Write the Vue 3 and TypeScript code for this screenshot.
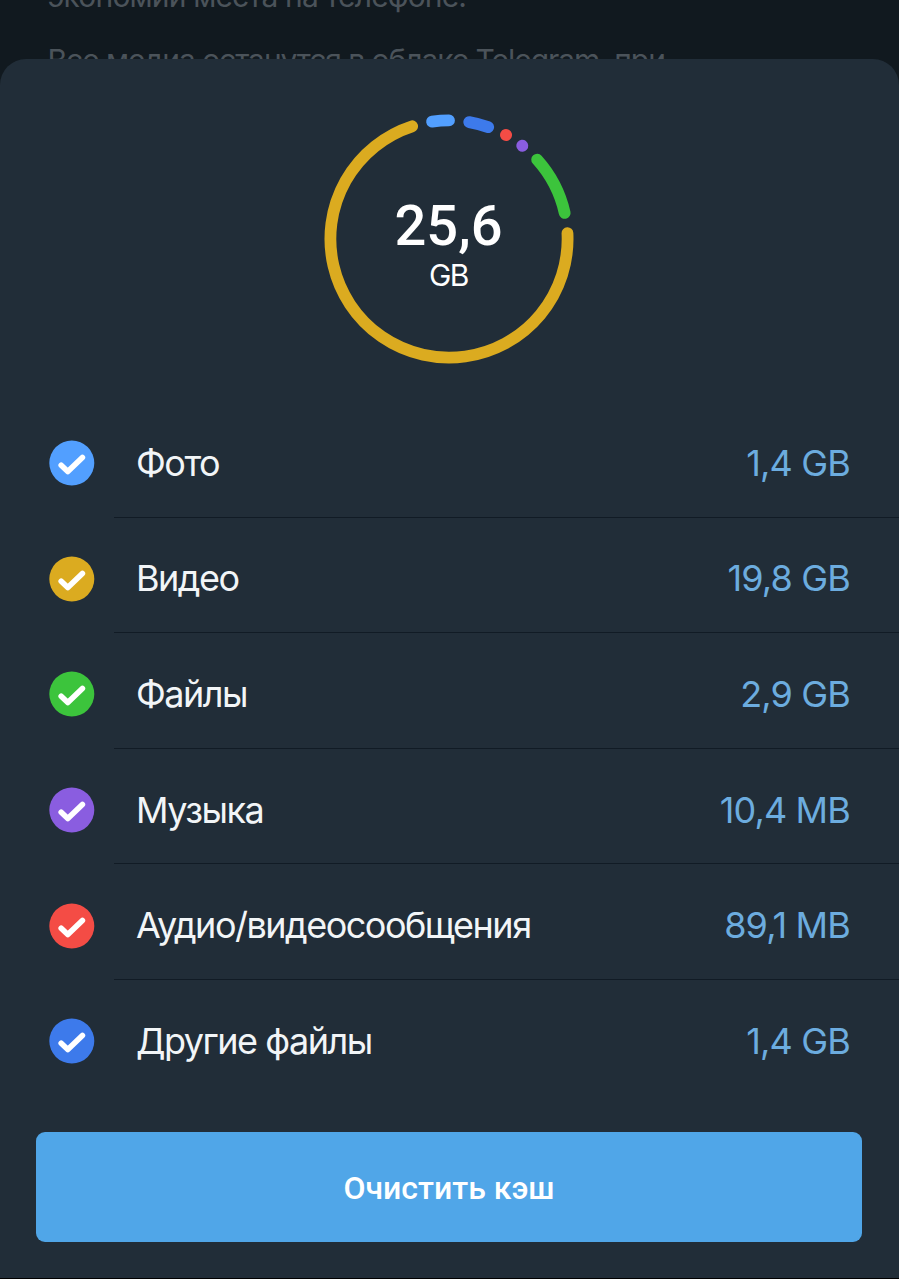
<template>
  <div class="screen">
    <div class="backdrop">
      <p class="hint">экономии места на телефоне.</p>
      <p class="hint hint-second">Все медиа останутся в облаке Telegram, при</p>
    </div>

    <div class="sheet">
      <div class="chart">
        <svg class="ring" viewBox="0 0 250 250">
          <path
            v-for="arc in arcs"
            :key="arc.color"
            :d="arcPath(arc.from, arc.to)"
            :stroke="arc.color"
          />
        </svg>
        <div class="total">
          <span class="total-value">25,6</span>
          <span class="total-unit">GB</span>
        </div>
      </div>

      <ul class="list">
        <li v-for="item in items" :key="item.label" class="row" @click="item.checked = !item.checked">
          <svg class="check" viewBox="0 0 46 46">
            <circle cx="22.8" cy="23" r="22.5" :fill="item.color" />
            <path v-if="item.checked" d="M12.2 25.2L18.8 31.6L33.4 17.4" />
          </svg>
          <div class="row-body">
            <span class="label">{{ item.label }}</span>
            <span class="size">{{ item.size }}</span>
          </div>
        </li>
      </ul>

      <button class="clear-btn">Очистить кэш</button>
    </div>
  </div>
</template>

<script setup lang="ts">
import { ref } from 'vue'

interface CacheItem {
  label: string
  size: string
  color: string
  checked: boolean
}

const items = ref<CacheItem[]>([
  { label: 'Фото', size: '1,4 GB', color: '#529fff', checked: true },
  { label: 'Видео', size: '19,8 GB', color: '#dbab20', checked: true },
  { label: 'Файлы', size: '2,9 GB', color: '#3cc43c', checked: true },
  { label: 'Музыка', size: '10,4 MB', color: '#8a5de0', checked: true },
  { label: 'Аудио/видеосообщения', size: '89,1 MB', color: '#f44c45', checked: true },
  { label: 'Другие файлы', size: '1,4 GB', color: '#3d7aeb', checked: true },
])

// angles in degrees, clockwise from the top
const arcs = [
  { from: -8.2, to: 0, color: '#529fff' },
  { from: 9.8, to: 19.3, color: '#3d7aeb' },
  { from: 28.7, to: 28.8, color: '#f44c45' },
  { from: 38.1, to: 38.2, color: '#8a5de0' },
  { from: 48, to: 77.3, color: '#3cc43c' },
  { from: 87.2, to: 341.9, color: '#dbab20' },
]

const point = (deg: number) => {
  const a = (deg * Math.PI) / 180
  return `${(125 + 118.6 * Math.sin(a)).toFixed(2)} ${(125 - 118.6 * Math.cos(a)).toFixed(2)}`
}

const arcPath = (from: number, to: number) =>
  `M${point(from)}A118.6 118.6 0 ${to - from > 180 ? 1 : 0} 1 ${point(to)}`
</script>

<style>
body {
  margin: 0;
  background-color: #000;
}
</style>

<style scoped>
.screen {
  width: 100%;
  height: 1278px;
  display: flex;
  flex-direction: column;
  background-color: #11191f;
  font-family: Inter, "Liberation Sans", sans-serif;
  overflow: hidden;
}

.backdrop {
  height: 58.5px;
  flex-shrink: 0;
  padding-left: 47.5px;
  box-sizing: border-box;
  overflow: hidden;
}

.hint {
  margin: -23px 0 0;
  font-size: 30px;
  line-height: 38px;
  letter-spacing: -0.85px;
  color: #4b535a;
  white-space: nowrap;
}

.hint-second {
  margin-top: 26px;
  letter-spacing: -1.05px;
}

.sheet {
  flex: 1;
  display: flex;
  flex-direction: column;
  background-color: #212d38;
  border-radius: 26px 26px 0 0;
}

.chart {
  display: grid;
  justify-content: center;
  margin-top: 55px;
  padding-right: 2px;
}

.ring {
  grid-area: 1 / 1;
  width: 250px;
  height: 250px;
}

.ring path {
  fill: none;
  stroke-width: 11.8;
  stroke-linecap: round;
}

.total {
  grid-area: 1 / 1;
  display: flex;
  flex-direction: column;
  align-items: center;
  padding-top: 80px;
  color: #fff;
}

.total-value {
  font-family: Roboto, sans-serif;
  font-size: 56px;
  font-weight: 500;
  line-height: 64px;
}

.total-unit {
  font-size: 30px;
  line-height: 34px;
  letter-spacing: -1.5px;
}

.list {
  list-style: none;
  margin: 38.5px 0 0;
  padding: 0;
}

.row {
  height: 115.6px;
  display: flex;
  align-items: center;
  padding-left: 49px;
  cursor: pointer;
}

.check {
  width: 46px;
  height: 46px;
  flex-shrink: 0;
  margin-top: 7px;
}

.check path {
  fill: none;
  stroke: #fff;
  stroke-width: 5.6;
  stroke-linecap: round;
  stroke-linejoin: round;
}

.row-body {
  flex: 1;
  height: 100%;
  box-sizing: border-box;
  display: flex;
  align-items: center;
  justify-content: space-between;
  margin-left: 19px;
  padding: 7px 49px 0 22px;
  border-bottom: 1px solid #111b25;
}

.row:last-child .row-body {
  border-bottom-color: transparent;
}

.label {
  font-size: 36px;
  letter-spacing: -1.5px;
  color: #f2f5f7;
}

.size {
  font-size: 36px;
  letter-spacing: -0.85px;
  color: #6cacdf;
}

.clear-btn {
  height: 110px;
  margin: 36px 37px 0 36px;
  padding: 3px 0 0;
  border: none;
  border-radius: 9px;
  background-color: #50a6e8;
  color: #fff;
  font-family: Roboto, sans-serif;
  font-size: 32px;
  font-weight: 500;
  cursor: pointer;
}
</style>
